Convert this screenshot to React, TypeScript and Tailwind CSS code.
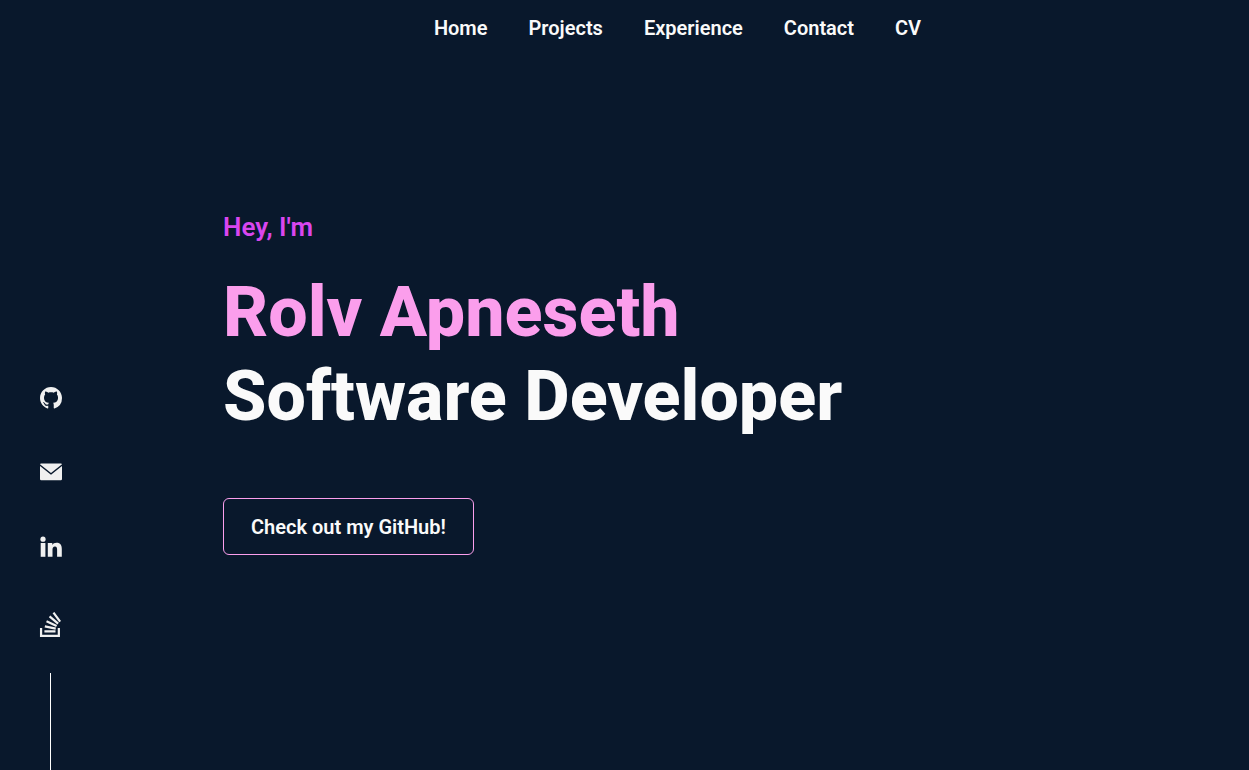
import { SiStackoverflow } from "react-icons/si";
import { BsGithub } from "react-icons/bs";

const links = ["Home", "Projects", "Experience", "Contact", "CV"];

function MailIcon() {
  return (
    <svg width="22" height="18" viewBox="0 0 22 18" fill="currentColor" aria-hidden="true">
      <path d="M1 .5h20q.8 0 1 .8L11 10 0 1.300Q.2.500 1 .500z" />
      <path d="M0 3l11 8.800L22 3v13q0 1.200-1.200 1.200H1.200Q0 17.200 0 16z" />
    </svg>
  );
}

function LinkedinIcon() {
  return (
    <svg width="22" height="22" viewBox="0 0 22 22" fill="currentColor" aria-hidden="true">
      <circle cx="3" cy="3.200" r="2.600" />
      <path d="M.7 7h4.700v13.800H.7z" />
      <path d="M7.800 7h4.500v1.900c.8-1.400 2.200-2.200 4.200-2.200 4.100 0 5.300 2.500 5.300 6.300v7.800h-4.700v-7c0-1.900-.3-3.200-2.100-3.200-1.900 0-2.500 1.300-2.500 3.200v7H7.800z" />
    </svg>
  );
}

export default function App() {
  return (
    <div className="flex min-h-screen flex-col bg-[#09182c] font-['Roboto',sans-serif] text-[#fafafa]">
      <header className="flex justify-center pt-3.5 pl-[106px]">
        <nav className="flex gap-[41px] text-[20px] leading-7 font-semibold">
          {links.map((l) => (
            <a key={l} href={`#${l.toLowerCase()}`}>{l}</a>
          ))}
        </nav>
      </header>
      <main className="flex flex-col items-start pt-[169px] pl-[223px]">
        <p className="text-[26px] leading-8 font-semibold text-[#d946ef]">Hey, I'm</p>
        <h1 className="mt-[27px] text-[70px] leading-[84px] font-extrabold">
          <span className="block text-[#fb9eec]">Rolv Apneseth</span>
          <span className="block">Software Developer</span>
        </h1>
        <a href="#github" className="mt-[60px] rounded-md border border-[#fb9eec] px-[27px] pt-3.5 pb-[13px] text-[20px] leading-7 font-semibold">
          Check out my GitHub!
        </a>
      </main>
      <aside className="fixed bottom-0 left-10 flex w-[22px] flex-col items-start text-[#f0f0f0]">
        <a href="#github" aria-label="GitHub"><BsGithub size={22} /></a>
        <a href="#mail" aria-label="Email" className="mt-[54px]"><MailIcon /></a>
        <a href="#linkedin" aria-label="LinkedIn" className="mt-[55px]"><LinkedinIcon /></a>
        <a href="#stack" aria-label="Stack Overflow" className="mt-[54px] -ml-0.5"><SiStackoverflow size={25} /></a>
        <span className="mt-9 ml-2.5 h-[97px] w-px bg-white" />
      </aside>
    </div>
  );
}
